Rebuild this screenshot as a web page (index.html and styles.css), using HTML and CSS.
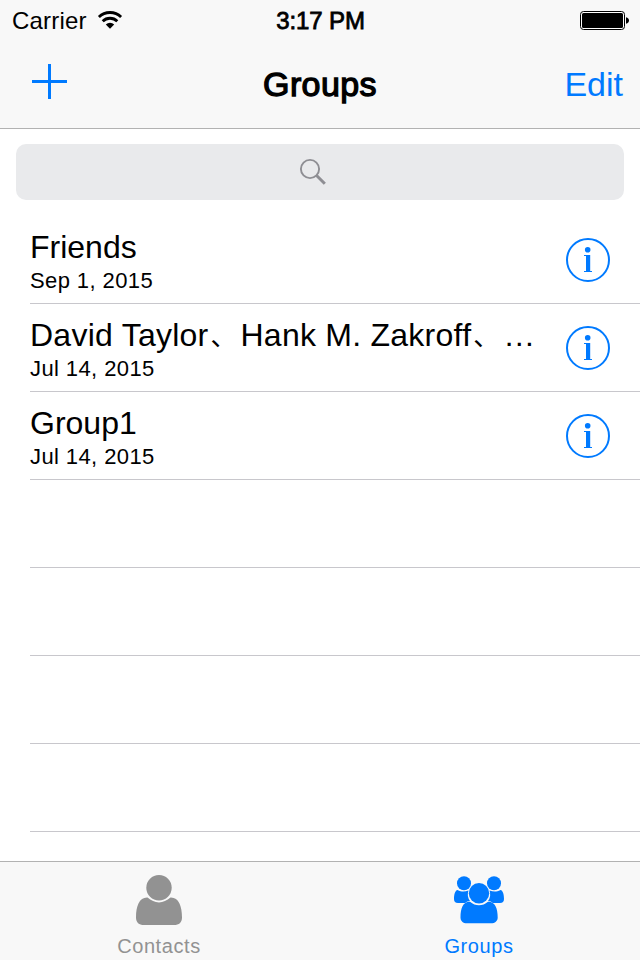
FILE: index.html
```html
<!DOCTYPE html>
<html lang="en">
<head>
<meta charset="utf-8">
<title>Groups</title>
<link rel="stylesheet" href="styles.css">
</head>
<body>
<svg class="defs" width="0" height="0">
  <symbol id="info" viewBox="0 0 44 44">
    <circle cx="22" cy="22" r="21" fill="none" stroke="currentColor" stroke-width="2"/>
    <circle cx="21.700" cy="11.700" r="2.800" fill="currentColor"/>
    <path d="M18 17h6.200v16h1.800v1.100h-8v-1.100h2V18.100h-2z" fill="currentColor"/>
  </symbol>
</svg>
<div class="screen">
  <header class="header">
    <div class="status">
      <div class="carrier">
        <span>Carrier</span>
        <svg class="wifi" width="26" height="20" viewBox="0 0 26 20">
          <g fill="none" stroke="#000" stroke-width="2.800">
            <path d="M1.900 7.100A15.700 15.700 0 0 1 24.100 7.100"/>
            <path d="M5.700 11.300A10.300 10.300 0 0 1 20.300 11.300"/>
          </g>
          <path d="M13 18.800l-4.200-4.400a6.200 6.200 0 0 1 8.400 0z"/>
        </svg>
      </div>
      <div class="time">3:17 PM</div>
      <div class="power">
        <svg width="50" height="20" viewBox="0 0 50 20">
          <rect x=".5" y=".5" width="44" height="18" rx="3" fill="#fff" stroke="#000"/>
          <rect x="2" y="2" width="41" height="15" rx="1.500"/>
          <path d="M46 6.200c4 .8 4 5.800 0 6.600z"/>
        </svg>
      </div>
    </div>
    <nav class="nav">
      <div class="add">
        <svg width="35" height="35" viewBox="0 0 35 35"><path d="M16 0h3v16h16v3H19v16h-3V19H0v-3h16z" fill="currentColor"/></svg>
      </div>
      <h1 class="title">Groups</h1>
      <div class="edit">Edit</div>
    </nav>
  </header>
  <main class="content">
    <div class="search">
      <svg width="28" height="28" viewBox="0 0 28 28" fill="none" stroke="#8e8e93">
        <circle cx="11" cy="11" r="9.100" stroke-width="1.900"/>
        <path d="M17.300 17.300L25.800 25.800" stroke-width="3"/>
      </svg>
    </div>
    <ul class="list">
      <li class="row">
        <div class="text"><div class="name">Friends</div><div class="date">Sep 1, 2015</div></div>
        <svg class="info"><use href="#info"/></svg>
      </li>
      <li class="row">
        <div class="text"><div class="name members">David Taylor<span class="comma">、</span>Hank M. Zakroff<span class="comma">、</span>…</div><div class="date">Jul 14, 2015</div></div>
        <svg class="info"><use href="#info"/></svg>
      </li>
      <li class="row">
        <div class="text"><div class="name">Group1</div><div class="date">Jul 14, 2015</div></div>
        <svg class="info"><use href="#info"/></svg>
      </li>
      <li class="row"></li>
      <li class="row"></li>
      <li class="row"></li>
      <li class="row"></li>
    </ul>
  </main>
  <footer class="tabs">
    <div class="tab">
      <svg class="icon" width="60" height="60" viewBox="0 0 60 60" fill="currentColor">
        <circle cx="30" cy="17.700" r="12.700"/>
        <path d="M18.500 27.600C25.500 34 34.500 34 41.500 27.600C49.500 27.200 53 36 53 47.500C53 52.500 50 55 45 55H15C10 55 7 52.500 7 47.500C7 36 10.500 27.200 18.500 27.600Z"/>
      </svg>
      <span class="label">Contacts</span>
    </div>
    <div class="tab active">
      <svg class="icon" width="60" height="60" viewBox="0 0 60 60" fill="currentColor">
        <circle cx="15" cy="13.300" r="7"/>
        <circle cx="45" cy="13.300" r="7"/>
        <path d="M8.500 20C12.500 22 15.500 22 19.500 20.500A11.500 11.500 0 0 0 21 31C19 31.200 17.500 31.800 16.200 33H9C6.300 33 5 31.700 5 29C5 24.500 6 20.500 8.500 20Z"/>
        <path d="M51.500 20C47.500 22 44.500 22 40.500 20.500A11.500 11.500 0 0 1 39 31C41 31.200 42.500 31.800 43.800 33H51C53.700 33 55 31.700 55 29C55 24.500 54 20.500 51.500 20Z"/>
        <circle cx="30" cy="23.200" r="10.200"/>
        <path d="M21 31.700C26.500 36.500 33.500 36.500 39 31.700C46 31.400 48.700 38 48.700 47.500C48.700 51 46 53.300 42 53.300H18C14 53.300 11.500 51 11.500 47.500C11.500 38 14 31.400 21 31.700Z"/>
      </svg>
      <span class="label">Groups</span>
    </div>
  </footer>
</div>
</body>
</html>
```
FILE: styles.css
```css
* { box-sizing: border-box; }
body {
  margin: 0;
  background: #fff;
  color: #000;
  font-family: "Liberation Sans", "Noto Sans CJK JP", sans-serif;
}
.defs { display: block; }
.screen {
  display: flex;
  flex-direction: column;
  width: 640px;
  height: 960px;
  overflow: hidden;
}
.header {
  flex: none;
  height: 129px;
  background: #f8f8f8;
  border-bottom: 1px solid #b2b2b2;
}
.status {
  display: grid;
  grid-template-columns: 1fr auto 1fr;
  height: 40px;
  padding: 0 11px 0 12px;
  font-size: 24px;
  line-height: 42px;
}
.carrier { display: flex; gap: 10px; letter-spacing: 0.2px; }
.wifi { margin-top: 10px; }
.time { -webkit-text-stroke: 0.8px #000; letter-spacing: -0.1px; }
.power { display: flex; justify-content: flex-end; padding-top: 11px; margin-right: -1px; }
.nav {
  display: grid;
  grid-template-columns: 1fr auto 1fr;
  height: 88px;
  padding: 0 17px;
  font-size: 34px;
  line-height: 88px;
}
.add { color: #007aff; padding: 24px 0 0 15px; line-height: 0; }
.title {
  margin: 0;
  font-size: 34px;
  font-weight: 400;
  letter-spacing: 0.4px;
  -webkit-text-stroke: 1.3px #000;
}
.edit { color: #007aff; text-align: right; }
.content { flex: 1; min-height: 0; overflow: hidden; }
.search {
  display: flex;
  align-items: center;
  justify-content: center;
  height: 56px;
  margin: 15px 16px 16px;
  padding-right: 14px;
  border-radius: 10px;
  background: #e9eaec;
}
.list { margin: 0; padding: 0 0 0 30px; list-style: none; }
.row {
  display: flex;
  align-items: center;
  justify-content: space-between;
  height: 88px;
  padding-right: 30px;
  border-bottom: 1px solid #c8c7cc;
}
.name { height: 38px; font-size: 32px; line-height: 36px; white-space: nowrap; }
.members { letter-spacing: 0.25px; }
.comma {
  display: inline-block;
  width: 32px;
  padding-left: 2px;
  font-size: 26px;
  font-weight: 400;
  line-height: 30px;
}
.date { font-size: 22px; line-height: 28px; letter-spacing: 0.4px; }
.text { padding-top: 4px; }
.info { flex: none; width: 44px; height: 44px; color: #007aff; }
.tabs {
  display: flex;
  flex: none;
  height: 99px;
  background: #f8f8f8;
  border-top: 1px solid #b2b2b2;
}
.tab {
  display: flex;
  flex: 1;
  flex-direction: column;
  align-items: center;
  padding: 8px 2px 0 0;
  color: #929292;
}
.active { color: #007aff; }
.icon { flex: none; }
.label { font-size: 20px; line-height: 32px; letter-spacing: 0.6px; }
```
